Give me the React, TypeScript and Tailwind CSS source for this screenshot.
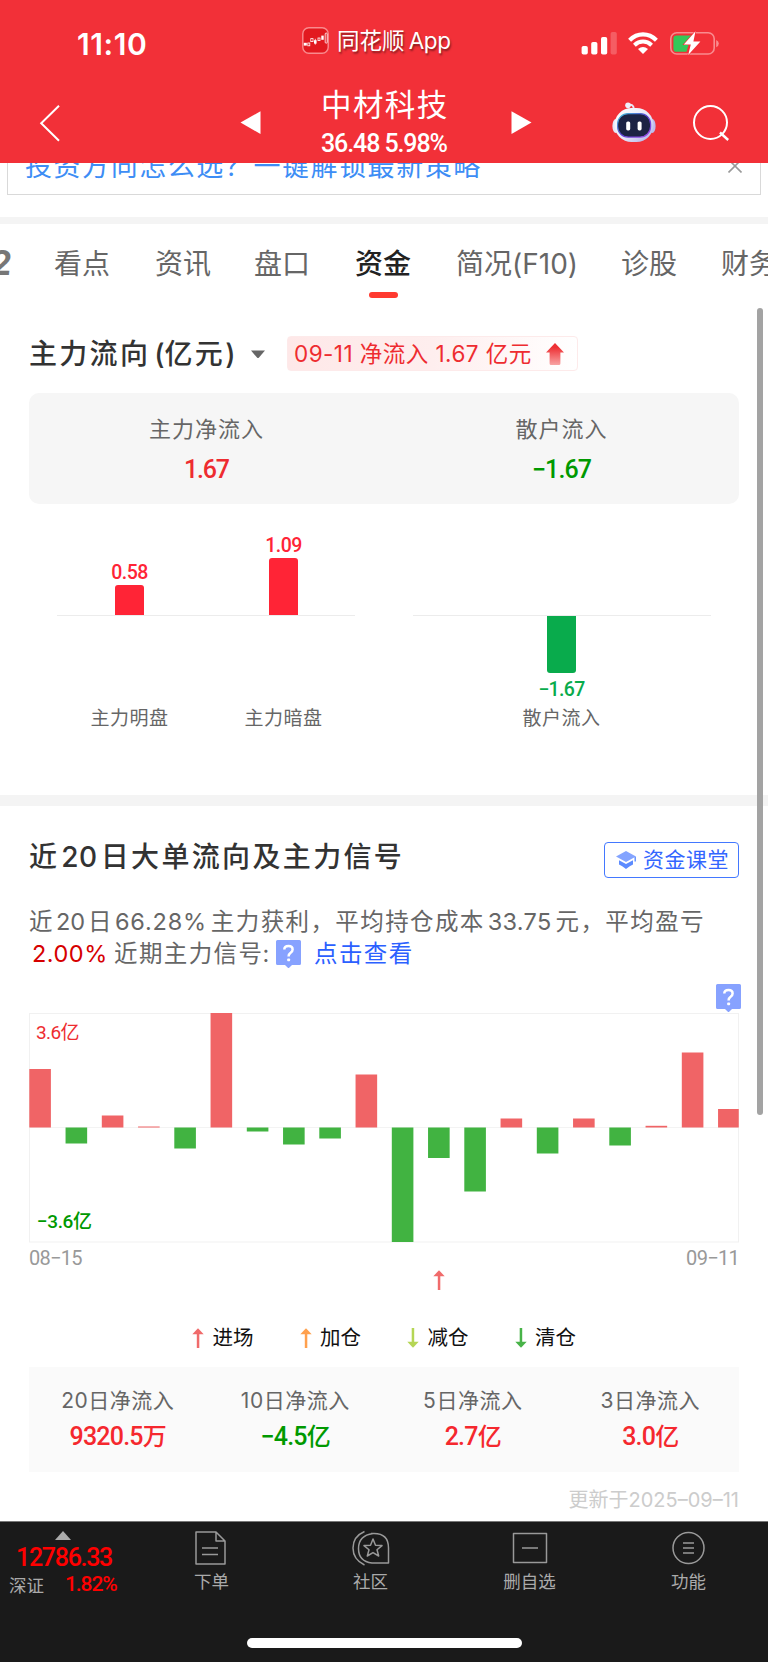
import clsx from "clsx"

const flowBars = [58.5, -16, 12, 1, -21, 114.5, -4, -17, -11, 53, -114.5, -30.5, -64, 9, -26, 9, -18, 1.7, 75, 18.5]

const tabs = [
    { name: "看点", className: "w-[101px]" },
    { name: "资讯", className: "w-[99px]" },
    { name: "盘口", className: "w-[101px]" },
    { name: "资金", className: "w-[101px]", active: true },
    { name: "简况(F10)", className: "w-[165px]" },
    { name: "诊股", className: "w-[100px]" },
    { name: "财务", className: "w-[100px]" },
]

const totals = [
    { label: "20日净流入", value: "9320.5", unit: "万", up: true },
    { label: "10日净流入", value: "−4.5", unit: "亿", up: false },
    { label: "5日净流入", value: "2.7", unit: "亿", up: true },
    { label: "3日净流入", value: "3.0", unit: "亿", up: true },
]

const Arrow = ({ color, down }: { color: string; down?: boolean }) => {
    return (
        <svg width="12" height="20" viewBox="0 0 12 20" className={clsx("shrink-0", down && "rotate-180")}>
            <path d="M6 0.3L11.7 6.3H0.3Z" fill={color} />
            <rect x="4.8" y="5" width="2.5" height="15" fill={color} />
        </svg>
    )
}

const HelpIcon = () => {
    return (
        <svg width="25" height="28" viewBox="0 0 25 28" className="block shrink-0">
            <path d="M1.5 0H23.5Q25 0 25 1.5V23.5Q25 25 23.5 25H16L12.5 28.4L9 25H1.5Q0 25 0 23.5V1.5Q0 0 1.5 0Z" fill="#87a2ff" />
            <path d="M8.3 9.6Q8.3 6 12.5 6Q16.6 6 16.6 9.4Q16.6 11.3 14.6 12.8Q12.6 14.2 12.6 16.4" fill="none" stroke="#fff" strokeWidth="2.5" />
            <rect x="11.2" y="18.4" width="2.9" height="2.9" rx="0.8" fill="#fff" />
        </svg>
    )
}

const StatusBar = () => {
    return (
        <div className="flex h-[84px] items-start">
            <p className="ml-[77px] mt-[29px] w-[225px] text-[30px] leading-[30px] font-semibold tracking-[0.6px]">11:10</p>
            <svg width="27" height="27" viewBox="0 0 27 27" className="mt-[27px]">
                <rect x="0.8" y="0.8" width="25.4" height="25.4" rx="6" fill="#e2191f" stroke="#f98a8d" strokeWidth="1.4" />
                <g fill="#fff">
                    <rect x="1.8" y="15.8" width="3" height="2.8" />
                    <rect x="12" y="13.2" width="2.6" height="3.4" />
                    <rect x="19.3" y="8.6" width="2.4" height="4.2" />
                </g>
                <g fill="none" stroke="#fff" strokeWidth="0.8">
                    <rect x="5.8" y="16" width="2" height="2.8" />
                    <rect x="8.8" y="11.6" width="2.2" height="3" />
                    <path d="M13.3 11.8v5.8" />
                    <rect x="16" y="11" width="2" height="2.6" />
                    <rect x="23.2" y="6" width="2" height="10.2" rx="1" />
                </g>
            </svg>
            <p className="ml-[8px] mt-[27px] w-[244px] text-[22.5px] leading-[28px] [text-shadow:1px_2px_2px_rgba(0,0,0,0.45)]">
                同花顺 <span className="-ml-[2px] tracking-[-0.5px]">App</span>
            </p>
            <svg width="36" height="24" viewBox="0 0 36 24" className="mt-[31px]" fill="#fff">
                <rect x="0.6" y="15" width="6.2" height="8.5" rx="1.8" />
                <rect x="10.2" y="11" width="6.2" height="12.5" rx="1.8" />
                <rect x="20" y="6" width="6.2" height="17.5" rx="1.8" />
                <rect x="29.6" y="1" width="6.2" height="22.5" rx="1.8" opacity="0.22" />
            </svg>
            <svg width="30" height="22" viewBox="0 0 30 22" className="ml-[11px] mt-[32px]" fill="none" stroke="#fff">
                <path d="M1.6 8.2Q7.5 2.4 15 2.4T28.4 8.2" strokeWidth="4.2" />
                <path d="M6.4 13.2Q10.2 9.6 15 9.6T23.6 13.2" strokeWidth="4" />
                <path d="M15 22L10 17Q15 13.2 20 17Z" fill="#fff" stroke="none" />
            </svg>
            <svg width="50" height="24" viewBox="0 0 50 24" className="ml-[12px] mt-[31px]">
                <rect x="0.8" y="1.8" width="43.4" height="21.2" rx="6" fill="none" stroke="#f98b8f" strokeWidth="1.6" />
                <path d="M46.2 9Q48.8 10 48.8 12.6T46.2 16.2Z" fill="#f98b8f" />
                <path d="M6.5 4.4H22L13.5 14H18.5L16.5 20.8H6.5Q3.4 20.8 3.4 17.7V7.5Q3.4 4.4 6.5 4.4Z" fill="#34c759" />
                <path d="M25.5 0.3L13.8 13.4H20.8L18.2 24L30.4 10.6H23.4Z" fill="#fff" stroke="#f23038" strokeWidth="1.2" paintOrder="stroke" />
            </svg>
        </div>
    )
}

const Robot = () => {
    return (
        <svg width="44" height="42" viewBox="0 0 44 42" className="mt-[17px]">
            <defs>
                <linearGradient id="shell" x1="0" y1="0" x2="1" y2="1">
                    <stop offset="0" stopColor="#fff" />
                    <stop offset="0.55" stopColor="#e6e8f8" />
                    <stop offset="1" stopColor="#a9a8e6" />
                </linearGradient>
                <linearGradient id="rim" x1="0" y1="0" x2="1" y2="1">
                    <stop offset="0" stopColor="#3fc6d8" />
                    <stop offset="0.5" stopColor="#5a3fd0" />
                    <stop offset="1" stopColor="#a04de8" />
                </linearGradient>
            </defs>
            <path d="M16 4Q21.5 2.5 21.8 8" fill="none" stroke="#e9e9f7" strokeWidth="2" />
            <circle cx="16" cy="4.2" r="2.8" fill="#eef0fb" />
            <ellipse cx="3.8" cy="25" rx="3.4" ry="7" fill="#e4e6f8" />
            <ellipse cx="40.2" cy="25" rx="3.4" ry="7" fill="#bcbcec" />
            <rect x="2.5" y="7" width="39" height="34" rx="17" fill="url(#shell)" />
            <rect x="5.6" y="12.6" width="33" height="23.5" rx="10.5" fill="#1c2344" stroke="url(#rim)" strokeWidth="1.2" />
            <rect x="14.2" y="20.4" width="4" height="9" rx="1.6" fill="#fff" />
            <rect x="25.6" y="20.4" width="4" height="9" rx="1.6" fill="#fff" />
        </svg>
    )
}

const TitleBar = () => {
    return (
        <div className="flex h-[79px] items-start">
            <svg width="22" height="38" viewBox="0 0 22 38" className="ml-[39px] mt-[20px]" fill="none" stroke="#fff" strokeWidth="2">
                <path d="M20 1.8L2.2 19.3L20 36.8" />
            </svg>
            <svg width="21" height="24" viewBox="0 0 21 24" className="ml-[179px] mt-[27px]">
                <path d="M0.5 11.6L20.5 0.3V23Z" fill="#fff" />
            </svg>
            <div className="ml-[60px] w-[126px] whitespace-nowrap">
                <p className="mt-[3px] text-[30.5px] leading-[36px] tracking-[1.4px]">中材科技</p>
                <p className="mt-[10px] font-[Roboto] text-[25px] leading-[22px] font-medium tracking-[-1.1px]">36.48 5.98%</p>
            </div>
            <svg width="21" height="24" viewBox="0 0 21 24" className="ml-[64px] mt-[27px]">
                <path d="M20.5 11.6L0.5 0.3V23Z" fill="#fff" />
            </svg>
            <div className="ml-[80px]">
                <Robot />
            </div>
            <svg width="38" height="38" viewBox="0 0 38 38" className="ml-[36px] mt-[20px]" fill="none" stroke="#fff" strokeWidth="2">
                <circle cx="18.5" cy="18.5" r="16.5" />
                <path d="M28 28.5L36.2 36" strokeWidth="2.4" />
            </svg>
        </div>
    )
}

const Banner = () => {
    return (
        <div className="mx-[7px] flex h-[32px] justify-between overflow-hidden border border-t-0 border-[#d9d9d9]">
            <p className="-mt-[10px] ml-[17px] whitespace-nowrap text-[27px] leading-[28px] tracking-[1.55px] text-[#3d8df5]">投资方向怎么选？一键解锁最新策略</p>
            <svg width="14" height="14" viewBox="0 0 14 14" className="mr-[18px] mt-[-4px]" stroke="#999" strokeWidth="1.6">
                <path d="M0.5 0.5L13.5 13.5M13.5 0.5L0.5 13.5" />
            </svg>
        </div>
    )
}

const Tabs = () => {
    return (
        <div className="flex h-[84px] overflow-hidden">
            <p className="-ml-[11px] mt-[21px] w-[65px] shrink-0 -skew-x-6 text-[34px] leading-[36px] font-bold text-[#777]">2</p>
            {tabs.map((tab) => (
                <div key={tab.name} className={clsx("shrink-0", tab.className)}>
                    <p className={clsx("mt-[22px] whitespace-nowrap text-[28px] leading-[36px]", tab.active ? "font-medium text-[#222]" : "text-[#666]")}>
                        {tab.name}
                    </p>
                    {tab.active && <div className="ml-[14px] mt-[10px] h-[6px] w-[29px] rounded-full bg-[#ff3a30]" />}
                </div>
            ))}
        </div>
    )
}

const Bar = ({ value, label, height, down }: { value: string; label: string; height: string; down?: boolean }) => {
    return (
        <div className="flex w-[154px] flex-col items-center">
            <div className="flex h-[95px] flex-col items-center justify-end">
                {!down && (
                    <>
                        <p className="mb-[2px] font-[Roboto] text-[19.5px] leading-[20px] font-medium tracking-[-0.6px] text-[#ff2436]">{value}</p>
                        <div className={clsx("w-[29px] rounded-t-[3px] bg-[#ff2436]", height)} />
                    </>
                )}
            </div>
            <div className="h-px" />
            <div className="flex h-[90px] flex-col items-center">
                {down && (
                    <>
                        <div className={clsx("w-[29px] rounded-b-[3px] bg-[#09ab4c]", height)} />
                        <p className="mt-[7px] font-[Roboto] text-[19.5px] leading-[20px] font-medium tracking-[-0.6px] text-[#09ab4c]">{value}</p>
                    </>
                )}
            </div>
            <p className="mt-px text-[19px] leading-[24px] tracking-[0.5px] text-[#666]">{label}</p>
        </div>
    )
}

const MainFlow = () => {
    return (
        <div className="h-[487px] px-[29px]">
            <div className="flex h-[85px] items-start">
                <h2 className="mt-[28px] w-[222px] whitespace-nowrap text-[28px] leading-[36px] font-medium tracking-[2.3px] text-[#333]">
                    主力流向<span className="ml-[4px] tracking-[1px]">(</span><span className="-ml-[1px]">亿元</span>)
                </h2>
                <svg width="14" height="9" viewBox="0 0 14 9" className="mt-[42px]">
                    <path d="M0 0.5H14L8 7.6Q7 8.6 6 7.6Z" fill="#666" />
                </svg>
                <div className="ml-[22px] mt-[28px] flex h-[35px] w-[291px] items-center rounded-[4px] border border-[#fdeaea] bg-linear-to-r from-[#fee8e8] via-[#feeeee] to-white">
                    <p className="ml-[6px] w-[252px] whitespace-nowrap text-[22.5px] leading-[30px] tracking-[0.45px] text-[#ee2c30]">09-11 净流入 1.67 亿元</p>
                    <svg width="18" height="22" viewBox="0 0 18 22">
                        <defs>
                            <linearGradient id="up" x1="0" y1="0" x2="0" y2="1">
                                <stop offset="0.2" stopColor="#ee3034" />
                                <stop offset="1" stopColor="#f8a4a4" />
                            </linearGradient>
                        </defs>
                        <path d="M9 0L18 9.5H14.4V20.5Q14.4 22 13 22H5Q3.6 22 3.6 20.5V9.5H0Z" fill="url(#up)" />
                    </svg>
                </div>
            </div>
            <div className="grid h-[111px] grid-cols-2 rounded-[10px] bg-[#f6f6f6] text-center">
                <div>
                    <p className="mt-[21px] text-[22px] leading-[30px] tracking-[1px] text-[#666]">主力净流入</p>
                    <p className="mt-[14px] font-[Roboto] text-[25px] leading-[24px] font-medium tracking-[-1.2px] text-[#ee2c30]">1.67</p>
                </div>
                <div>
                    <p className="mt-[21px] text-[22px] leading-[30px] tracking-[1px] text-[#666]">散户流入</p>
                    <p className="mt-[14px] font-[Roboto] text-[25px] leading-[24px] font-medium tracking-[-0.9px] text-[#009900]">−1.67</p>
                </div>
            </div>
            <div className="mt-[16px] grid h-[210px] grid-cols-2">
                <div className="flex justify-center bg-[linear-gradient(#ececec,#ececec)] bg-[length:298px_1px] bg-[position:28px_95px] bg-no-repeat">
                    <Bar value="0.58" label="主力明盘" height="h-[30px]" />
                    <Bar value="1.09" label="主力暗盘" height="h-[57px]" />
                </div>
                <div className="flex justify-center bg-[linear-gradient(#ececec,#ececec)] bg-[length:298px_1px] bg-[position:29px_95px] bg-no-repeat">
                    <Bar value="−1.67" label="散户流入" height="h-[57px]" down />
                </div>
            </div>
        </div>
    )
}

const FlowChart = () => {
    return (
        <div className="relative h-[230px]">
            <svg width="710" height="230" viewBox="0 0 710 230" className="block">
                <rect x="0.5" y="0.5" width="709" height="228.5" fill="none" stroke="#f1f1f1" />
                <path d="M0 114.5H710" stroke="#f3f3f3" />
                {flowBars.map((v, i) => (
                    <rect
                        key={i}
                        x={0.3 + i * 36.25}
                        y={v > 0 ? 114.5 - v : 114.5}
                        width={i === 19 ? 20.7 : 21.6}
                        height={Math.abs(v)}
                        fill={v > 0 ? "#f06466" : "#41b341"}
                    />
                ))}
            </svg>
            <p className="absolute left-[7px] top-[8px] font-[Roboto,'Noto_Sans_CJK_SC'] text-[19px] leading-[24px] tracking-[-0.6px] text-[#ee2c30]">3.6亿</p>
            <p className="absolute left-[8px] top-[197px] font-[Roboto,'Noto_Sans_CJK_SC'] text-[19px] leading-[24px] font-medium tracking-[-0.4px] text-[#009900]">−3.6亿</p>
        </div>
    )
}

const Legend = ({ label, color, down }: { label: string; color: string; down?: boolean }) => {
    return (
        <div className="flex w-[107.5px] items-center">
            <Arrow color={color} down={down} />
            <p className="ml-[8.5px] text-[20.5px] leading-[26px] text-[#111]">{label}</p>
        </div>
    )
}

const Signals = () => {
    return (
        <div className="h-[715px] px-[29px]">
            <div className="flex h-[92px] items-start justify-between">
                <h2 className="mt-[33px] whitespace-nowrap text-[28px] leading-[36px] font-medium tracking-[2.35px] text-[#333]">
                    近<span className="mr-[3px] ml-[2px] tracking-[0.5px]">20</span>日大单流向及主力信号
                </h2>
                <div className="mt-[36px] flex h-[36px] w-[135px] items-center rounded-[4px] border border-[#4378ff]">
                    <svg width="20" height="18" viewBox="0 0 20 18" className="ml-[11px]">
                        <path d="M10 0L20 5.6L10 11L0 5.6Z" fill="#84a4ff" />
                        <path d="M3 9.2L10 13L17 9.2V13.6Q14 14.8 10 18Q6 14.8 3 13.6Z" fill="#5c8bff" />
                        <path d="M19.2 5.8V10.5" stroke="#5c8bff" strokeWidth="1.4" />
                    </svg>
                    <p className="ml-[7px] whitespace-nowrap text-[21px] leading-[28px] tracking-[0.5px] text-[#3366ff]">资金课堂</p>
                </div>
            </div>
            <div className="whitespace-nowrap text-[23.5px] tracking-[1.4px] text-[#666]">
                <p className="mt-[8px] leading-[32px]">
                    近<span className="mr-[3px] ml-[2px] tracking-[0px]">20</span>日<span className="mr-[4px] ml-[2px] tracking-[0.8px]">66.28%</span>主力获利，平均持仓成本<span className="mr-[4px] ml-[3px] tracking-[0.3px]">33.75</span>元，平均盈亏
                </p>
                <div className="flex h-[32px] items-center leading-[32px]">
                    <span className="ml-[3px] w-[82px] tracking-[0.5px] text-[#d60000]">2.00%</span>
                    <span className="w-[162px]">近期主力信号<span className="-ml-[1px]">:</span></span>
                    <HelpIcon />
                    <span className="ml-[13px] text-[#2b60ff]">点击查看</span>
                </div>
            </div>
            <div className="-mr-[2px] flex h-[44px] items-end justify-end pb-[2px]">
                <HelpIcon />
            </div>
            <div className="-mt-px">
                <FlowChart />
            </div>
            <div className="mt-[3px] flex justify-between font-[Roboto] text-[20px] leading-[24px] tracking-[-0.7px] text-[#999]">
                <span>08−15</span>
                <span>09−11</span>
            </div>
            <div className="ml-[404px] h-[20px]">
                <Arrow color="#f06b6b" />
            </div>
            <div className="ml-[163px] mt-[35px] flex">
                <Legend label="进场" color="#f06b6b" />
                <Legend label="加仓" color="#ffa04d" />
                <Legend label="减仓" color="#b5d655" down />
                <Legend label="清仓" color="#48b348" down />
            </div>
            <div className="mt-[16px] grid h-[105px] grid-cols-4 bg-[#fafafa] text-center">
                {totals.map((item) => (
                    <div key={item.label}>
                        <p className="mt-[20px] text-[21px] leading-[28px] tracking-[0.5px] text-[#666]">{item.label}</p>
                        <p className={clsx("mt-[8px] font-[Roboto,'Noto_Sans_CJK_SC'] text-[25px] leading-[28px] font-medium tracking-[-0.8px]", item.up ? "text-[#f5282e]" : "text-[#009900]")}>
                            {item.value}<span className="text-[24px]">{item.unit}</span>
                        </p>
                    </div>
                ))}
            </div>
            <p className="mt-[14px] text-right text-[20px] leading-[28px] text-[#ccc]">更新于2025–09–11</p>
        </div>
    )
}

const BottomBar = () => {
    return (
        <div className="h-[141px] border-t border-[#777] bg-[#1a1a1a] text-[#aaa]">
            <div className="flex h-[115px]">
                <div className="w-[132px]">
                    <svg width="16" height="9" viewBox="0 0 16 9" className="ml-[55px] mt-[9px]">
                        <path d="M8 0L16 9H0Z" fill="#aaa" />
                    </svg>
                    <p className="ml-[16px] mt-[4px] font-[Roboto] text-[25px] leading-[28px] font-medium tracking-[-1.3px] text-[#ff0000]">12786.33</p>
                    <div className="flex items-center">
                        <p className="ml-[9px] mt-[2px] w-[56px] text-[17.5px] leading-[24px]">深证</p>
                        <p className="-mt-[2px] font-[Roboto] text-[21px] leading-[24px] font-medium tracking-[-1.1px] text-[#ff0000]">1.82%</p>
                    </div>
                </div>
                <NavItem label="下单">
                    <path d="M3 2H23L32 11V34H3ZM23 2V11H32M9 18H25M9 24.500H25" />
                </NavItem>
                <NavItem label="社区">
                    <path d="M12.500 1.500Q1 6.500 1 18T12.500 35M19 3.500H22Q36.500 3.500 36.500 18V33H20Q6.500 31.500 6.500 18.500T21 3.500" />
                    <path d="M21 9L23.500 15.200L30 15.600L25 19.800L26.700 26L21 22.600L15.300 26L17 19.800L12 15.600L18.500 15.200Z" />
                </NavItem>
                <NavItem label="删自选">
                    <path d="M2.500 3.500H35.500V32.500H2.500ZM11 18H27" />
                </NavItem>
                <NavItem label="功能">
                    <circle cx="18.500" cy="18" r="15.500" />
                    <path d="M13 13H24M13 18H24M13 23H24" />
                </NavItem>
            </div>
            <div className="mx-auto mt-px h-[10px] w-[275px] rounded-full bg-white" />
        </div>
    )
}

const NavItem = ({ label, children }: { label: string; children: React.ReactNode }) => {
    return (
        <div className="flex w-[159px] flex-col items-center">
            <svg width="38" height="36" viewBox="0 0 38 36" className="mt-[8px]" fill="none" stroke="#999" strokeWidth="1.5" strokeLinejoin="round">
                {children}
            </svg>
            <p className="mt-[4px] text-[17.5px] leading-[24px]">{label}</p>
        </div>
    )
}

const App = () => {
    return (
        <div className="relative flex h-[1662px] w-[768px] flex-col overflow-hidden bg-white font-[Inter,'Noto_Sans_CJK_SC',sans-serif]">
            <div className="h-[163px] bg-[#f23038] text-white">
                <StatusBar />
                <TitleBar />
            </div>
            <Banner />
            <div className="mt-[22px] h-[7px] bg-[#f4f4f4]" />
            <Tabs />
            <MainFlow />
            <div className="h-[11px] bg-[#f4f4f4]" />
            <Signals />
            <BottomBar />
            <div className="absolute left-[757px] top-[308px] h-[807px] w-[6px] rounded-full bg-[#a3a3a3]" />
        </div>
    )
}

export default App
